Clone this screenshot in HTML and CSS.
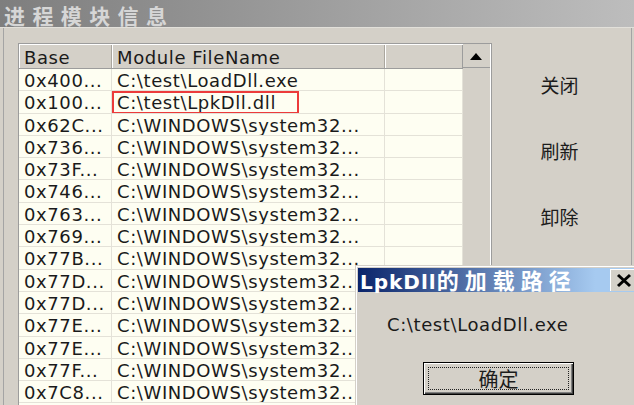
FILE: index.html
```html
<!DOCTYPE html>
<html lang="zh-CN">
<head>
<meta charset="utf-8">
<title>进程模块信息</title>
<link rel="stylesheet" href="styles.css">
</head>
<body>
<div class="window">
  <div class="titlebar"><span class="title-text">进程模块信息</span></div>
  <div class="client">
    <div class="list">
      <div class="grid">
        <div class="row head">
          <div class="cell">Base</div>
          <div class="cell">Module FileName</div>
          <div class="cell"></div>
        </div>
        <div class="row"><div class="cell">0x400...</div><div class="cell">C:\test\LoadDll.exe</div><div class="cell"></div></div>
        <div class="row"><div class="cell">0x100...</div><div class="cell marked">C:\test\LpkDll.dll<span class="mark"></span></div><div class="cell"></div></div>
        <div class="row"><div class="cell">0x62C...</div><div class="cell">C:\WINDOWS\system32...</div><div class="cell"></div></div>
        <div class="row"><div class="cell">0x736...</div><div class="cell">C:\WINDOWS\system32...</div><div class="cell"></div></div>
        <div class="row"><div class="cell">0x73F...</div><div class="cell">C:\WINDOWS\system32...</div><div class="cell"></div></div>
        <div class="row"><div class="cell">0x746...</div><div class="cell">C:\WINDOWS\system32...</div><div class="cell"></div></div>
        <div class="row"><div class="cell">0x763...</div><div class="cell">C:\WINDOWS\system32...</div><div class="cell"></div></div>
        <div class="row"><div class="cell">0x769...</div><div class="cell">C:\WINDOWS\system32...</div><div class="cell"></div></div>
        <div class="row"><div class="cell">0x77B...</div><div class="cell">C:\WINDOWS\system32...</div><div class="cell"></div></div>
        <div class="row"><div class="cell">0x77D...</div><div class="cell">C:\WINDOWS\system32...</div><div class="cell"></div></div>
        <div class="row"><div class="cell">0x77D...</div><div class="cell">C:\WINDOWS\system32...</div><div class="cell"></div></div>
        <div class="row"><div class="cell">0x77E...</div><div class="cell">C:\WINDOWS\system32...</div><div class="cell"></div></div>
        <div class="row"><div class="cell">0x77E...</div><div class="cell">C:\WINDOWS\system32...</div><div class="cell"></div></div>
        <div class="row"><div class="cell">0x77F...</div><div class="cell">C:\WINDOWS\system32...</div><div class="cell"></div></div>
        <div class="row"><div class="cell">0x7C8...</div><div class="cell">C:\WINDOWS\system32...</div><div class="cell"></div></div>
      </div>
      <div class="scrollbar">
        <div class="sb-up">
          <svg width="12" height="7" viewBox="0 0 12 7"><polygon points="6,0 12,7 0,7" fill="#000"/></svg>
        </div>
        <div class="sb-track"></div>
      </div>
    </div>
    <div class="actions">
      <button class="act">关闭</button>
      <button class="act">刷新</button>
      <button class="act">卸除</button>
    </div>
  </div>
</div>

<div class="dialog">
  <div class="dlg-title">
    <span class="dlg-title-text">LpkDll<span class="cjk-title">的加载路径</span></span>
    <span class="dlg-close">
      <svg width="16" height="15" viewBox="0 0 16 15"><path d="M2 2 L14 13 M14 2 L2 13" stroke="#000" stroke-width="3" fill="none"/></svg>
    </span>
  </div>
  <div class="dlg-body">
    <div class="dlg-msg">C:\test\LoadDll.exe</div>
    <button class="dlg-ok"><span class="focus">确定</span></button>
  </div>
</div>
</body>
</html>
```
FILE: styles.css
```css
* { box-sizing: border-box; }
html, body { margin: 0; padding: 0; }
body {
  width: 634px;
  height: 405px;
  overflow: hidden;
  position: relative;
  background: #d4d0c8;
  font-family: "DejaVu Sans", "Noto Sans CJK SC", sans-serif;
  color: #1a1a1a;
}
.window {
  display: flex;
  flex-direction: column;
  height: 405px;
}
.titlebar {
  height: 28px;
  background: linear-gradient(to right, #7e7e7e, #bdbdbd);
  border-bottom: 1px solid #e2e0da;
  padding: 3px 0 0 4px;
}
.title-text {
  font-family: "Noto Sans CJK SC", sans-serif;
  font-weight: 700;
  font-size: 21px;
  line-height: 24px;
  letter-spacing: 7.4px;
  color: #d6d6d6;
  display: block;
}
.client {
  flex: 1;
  display: flex;
  margin: 0 2px 0 3px;
  border-left: 1px solid #a4a4a4;
  border-right: 1px solid #a4a4a4;
  padding: 15px 0 0 14px;
  min-height: 0;
}
.list {
  width: 474px;
  display: flex;
  border-top: 1px solid #9c9c9c;
  border-left: 1px solid #9c9c9c;
  border-right: 1px solid #9c9c9c;
  overflow: hidden;
}
.grid {
  width: 444px;
  background: #fefef2;
}
.row {
  display: grid;
  grid-template-columns: 93px 273px 1fr;
  height: 22.3px;
  border-bottom: 1px solid #e4e2d8;
  font-size: 18px;
  letter-spacing: 0.6px;
  line-height: 21px;
  white-space: nowrap;
}
.row .cell { padding-top: 1px; }
.row.head {
  height: 25px;
  background: #d4d0c8;
  border-top: 1px solid #fff;
  border-bottom: 1px solid #9c9c9c;
  line-height: 23px;
}
.cell {
  padding-left: 5px;
  border-right: 1px solid #e4e2d8;
  overflow: hidden;
}
.row.head .cell {
  border-right: 1px solid #aaa69e;
  box-shadow: inset 1px 0 0 #fff;
}
.row.head .cell:last-child { border-right: 1px solid #9c9c9c; }
.marked { position: relative; }
.mark {
  position: absolute;
  left: 0;
  top: 0;
  width: 187px;
  height: 23px;
  border: 2px solid #ec3b3b;
}
.scrollbar {
  flex: 1;
  display: flex;
  flex-direction: column;
  border-right: 1px solid #fff;
}
.sb-up {
  height: 24px;
  border-bottom: 1px solid #9c9c9c;
  display: flex;
  align-items: center;
  justify-content: center;
  padding-top: 1px;
  padding-right: 2px;
}
.sb-track { flex: 1; }
.actions {
  flex: 1;
  display: flex;
  flex-direction: column;
  align-items: center;
  padding-top: 8px;
}
.act {
  height: 66px;
  width: 100px;
  border: none;
  background: transparent;
  font-family: "Noto Sans CJK SC", sans-serif;
  font-size: 19px;
  color: #1c1c1c;
  padding: 0;
  margin-right: 4px;
}
.dialog {
  position: absolute;
  left: 355px;
  top: 265px;
  width: 282px;
  height: 150px;
  background: #d4d0c8;
  border-top: 1px solid #d4d0c8;
  border-left: 1px solid #d4d0c8;
  box-shadow: inset 1px 1px 0 #fff;
  padding: 2px 0 0 2px;
}
.dlg-title {
  height: 24px;
  display: flex;
  align-items: center;
  background: linear-gradient(to right, #0a246a, #a6caf0 85%);
  padding-left: 2px;
}
.dlg-title-text {
  color: #fff;
  font-weight: 700;
  font-size: 20px;
  letter-spacing: 1px;
  line-height: 24px;
  white-space: nowrap;
}
.cjk-title {
  font-family: "Noto Sans CJK SC", sans-serif;
  font-size: 22px;
  letter-spacing: 6px;
  margin-left: 0;
}
.dlg-close {
  margin-left: auto;
  margin-right: 2px;
  width: 25px;
  height: 22px;
  background: #d4d0c8;
  border-top: 1px solid #fff;
  border-left: 1px solid #fff;
  display: flex;
  align-items: center;
  padding-left: 5px;
}
.dlg-body {
  display: flex;
  flex-direction: column;
  align-items: flex-start;
}
.dlg-msg {
  margin: 22px 0 0 29px;
  font-size: 18px;
  letter-spacing: 0.6px;
  line-height: 22px;
}
.dlg-ok {
  margin: 26px 0 0 65px;
  width: 151px;
  height: 33px;
  padding: 4px;
  display: flex;
  background: #d4d0c8;
  border: 1px solid #000;
  box-shadow: inset 1px 1px 0 #fff, inset -1px -1px 0 #404040, inset -2px -2px 0 #808080;
}
.focus {
  flex: 1;
  display: flex;
  align-items: center;
  justify-content: center;
  border: 1px dotted #222;
  font-family: "Noto Sans CJK SC", sans-serif;
  font-size: 20px;
  color: #1c1c1c;
  line-height: 1;
}
```
